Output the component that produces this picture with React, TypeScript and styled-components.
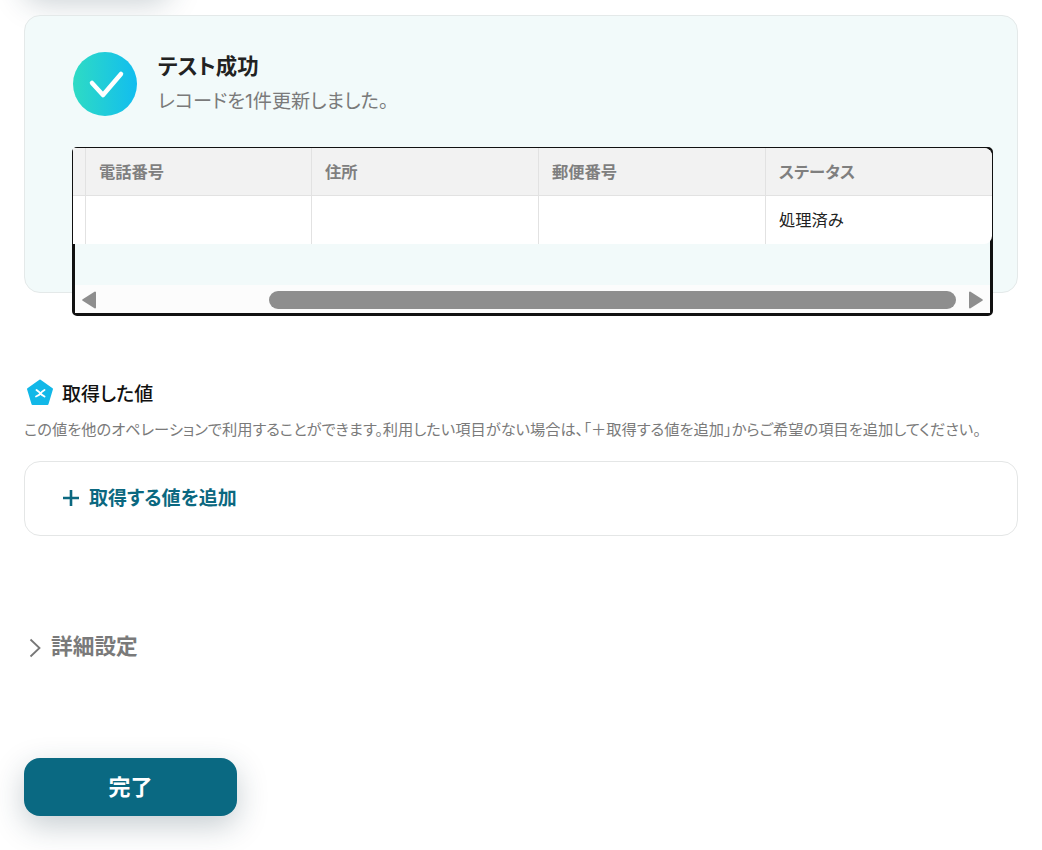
import React from "react";
import styled, { createGlobalStyle } from "styled-components";

const Global = createGlobalStyle`
  html, body { margin: 0; padding: 0; background: #fff; }
  body { font-family: Inter, "Noto Sans CJK JP", sans-serif; color: #222; font-feature-settings: "palt"; }
`;

const Page = styled.div`
  height: 850px;
  overflow: hidden;
  padding: 0 24px;
  box-sizing: border-box;
`;

const HiddenAction = styled.div`
  width: 146px;
  height: 58px;
  margin-top: -66px;
  margin-bottom: 23px;
  border-radius: 16px;
  background: #fff;
  box-shadow: 0 10px 30px rgba(30, 60, 75, 0.25);
`;

const ResultCard = styled.section`
  box-sizing: border-box;
  height: 278px;
  border: 1px solid #e4e9e9;
  border-radius: 16px;
  background: #f2fafa;
  padding: 36px 24px 0 48px;
`;

const ResultHead = styled.div`
  display: flex;
  align-items: center;
  gap: 21px;
`;

const CheckBadge = styled.div`
  width: 64px;
  height: 64px;
  border-radius: 50%;
  background: linear-gradient(90deg, #2edbc4 0%, #12bdef 100%);
  flex: none;
`;

const ResultTexts = styled.div`
  display: flex;
  flex-direction: column;
  gap: 8px;
  margin-top: -4px;
`;

const ResultTitle = styled.div`
  font-size: 21.4px;
  line-height: 30px;
  font-weight: 700;
  color: #222;
`;

const ResultSub = styled.div`
  font-size: 19.2px;
  line-height: 24px;
  color: #7a7a7a;
`;

const TableFrame = styled.div`
  box-sizing: border-box;
  width: 921px;
  height: 169px;
  margin: 31px 0 0 -1px;
  border: 3px solid #111;
  border-radius: 5px;
  display: flex;
  flex-direction: column;
`;

const Table = styled.div`
  height: 96px;
  margin: -2px -2px 0;
  background: #fff;
  border-radius: 0 8px 8px 0;
  overflow: hidden;
  display: grid;
  grid-template-columns: 13px 226px 227px 227px 1fr;
  grid-template-rows: 48px 48px;
`;

const HeadCell = styled.div`
  box-sizing: border-box;
  min-width: 0;
  background: #f2f2f2;
  border-bottom: 1px solid #e2e2e2;
  border-right: 1px solid #e2e2e2;
  padding: 0 0 1px 13px;
  display: flex;
  align-items: center;
  font-size: 16.3px;
  font-weight: 700;
  color: #7f7f7f;
  &:first-child { padding-left: 0; }
  &:nth-child(5) { border-right: none; }
`;

const BodyCell = styled.div`
  box-sizing: border-box;
  min-width: 0;
  border-right: 1px solid #e2e2e2;
  padding: 0 0 2px 13px;
  display: flex;
  align-items: center;
  font-size: 16.3px;
  color: #222;
  &:nth-child(6) { padding-left: 0; }
  &:last-child { border-right: none; }
`;

const Gap = styled.div`
  flex: 1;
`;

const ScrollBar = styled.div`
  box-sizing: border-box;
  height: 28px;
  background: #fcfcfc;
  display: flex;
  align-items: center;
  padding: 2px 7px 0;
`;

const Arrow = styled.svg`
  width: 14px;
  height: 18px;
  flex: none;
`;

const Track = styled.div`
  flex: 1;
  height: 18px;
  padding: 0 13px 0 173px;
  box-sizing: border-box;
`;

const Thumb = styled.div`
  height: 18px;
  border-radius: 9px;
  background: #8e8e8e;
`;

const SectionHead = styled.div`
  display: flex;
  align-items: center;
  gap: 8px;
  margin: 86px 0 0 2px;
  height: 28px;
`;

const SectionTitle = styled.h3`
  margin: 0;
  padding-top: 4px;
  font-size: 19px;
  font-weight: 500;
  color: #111;
  line-height: 28px;
`;

const SectionNote = styled.p`
  margin: 13px 0 0;
  font-size: 15.25px;
  line-height: 20px;
  color: #7a7a7a;
  white-space: nowrap;
`;

const AddCard = styled.div`
  box-sizing: border-box;
  height: 75px;
  margin-top: 21px;
  border: 1px solid #e4e6e6;
  border-radius: 16px;
  padding-left: 36px;
  display: flex;
  align-items: center;
  gap: 8px;
  font-size: 19px;
  font-weight: 700;
  color: #0b6880;
`;

const PlusIcon = styled.svg`
  width: 20px;
  height: 20px;
  margin-bottom: 2px;
`;

const AddLabel = styled.span`
  padding-bottom: 4px;
`;

const Details = styled.div`
  display: flex;
  align-items: center;
  gap: 6px;
  margin: 94px 0 0 1px;
  height: 34px;
  font-size: 21.7px;
  font-weight: 700;
  color: #7a7a7a;
`;

const DetailsLabel = styled.span`
  padding-bottom: 6px;
`;

const Chevron = styled.svg`
  width: 20px;
  height: 20px;
  margin-top: 2px;
`;

const DoneButton = styled.button`
  display: block;
  width: 213px;
  height: 58px;
  margin-top: 94px;
  padding: 0 0 4px;
  border: none;
  border-radius: 16px;
  background: #0a6982;
  color: #fff;
  font: 700 22px Inter, "Noto Sans CJK JP", sans-serif;
  box-shadow: 0 10px 30px rgba(30, 60, 75, 0.25);
`;

const heads = ["", "電話番号", "住所", "郵便番号", "ステータス"];
const cells = ["", "", "", "", "処理済み"];

export default function App() {
  return (
    <Page>
      <Global />
      <HiddenAction />
      <ResultCard>
        <ResultHead>
          <CheckBadge>
            <svg width="64" height="64" viewBox="0 0 64 64" fill="none">
              <path d="M19 31 L30 43 L48 22" stroke="#fff" strokeWidth="4.5" strokeLinecap="round" strokeLinejoin="round" />
            </svg>
          </CheckBadge>
          <ResultTexts>
            <ResultTitle>テスト成功</ResultTitle>
            <ResultSub>レコードを1件更新しました。</ResultSub>
          </ResultTexts>
        </ResultHead>
        <TableFrame>
          <Table>
            {heads.map((h, i) => <HeadCell key={i}>{h}</HeadCell>)}
            {cells.map((c, i) => <BodyCell key={i}>{c}</BodyCell>)}
          </Table>
          <Gap />
          <ScrollBar>
            <Arrow viewBox="0 0 14 18">
              <path d="M1.2 9 L13 1.5 V16.5 Z" fill="#8e8e8e" stroke="#8e8e8e" strokeWidth="2" strokeLinejoin="round" />
            </Arrow>
            <Track><Thumb /></Track>
            <Arrow viewBox="0 0 14 18">
              <path d="M12.8 9 L1 1.5 V16.5 Z" fill="#8e8e8e" stroke="#8e8e8e" strokeWidth="2" strokeLinejoin="round" />
            </Arrow>
          </ScrollBar>
        </TableFrame>
      </ResultCard>
      <SectionHead>
        <svg width="28" height="28" viewBox="0 0 28 28">
          <path d="M14 1.5 L26 10 L21.5 25 H6.5 L2 10 Z" fill="#12b8e8" stroke="#12b8e8" strokeWidth="2" strokeLinejoin="round" />
          <path d="M10.5 11 Q14 13.5 14.5 14.5 Q15 15.5 18.5 17.5 M18.5 11 Q15 13 14.5 14.5 Q13.5 16 10 17.5" stroke="#fff" strokeWidth="1.9" fill="none" strokeLinecap="round" />
        </svg>
        <SectionTitle>取得した値</SectionTitle>
      </SectionHead>
      <SectionNote>この値を他のオペレーションで利用することができます。利用したい項目がない場合は、「＋取得する値を追加」からご希望の項目を追加してください。</SectionNote>
      <AddCard>
        <PlusIcon viewBox="0 0 20 20">
          <path d="M10 2 V18 M2 10 H18" stroke="#0b6880" strokeWidth="2.6" />
        </PlusIcon>
        <AddLabel>取得する値を追加</AddLabel>
      </AddCard>
      <Details>
        <Chevron viewBox="0 0 20 20" fill="none">
          <path d="M5.5 1.5 L14.5 10 L5.5 18.5" stroke="#777" strokeWidth="1.8" />
        </Chevron>
        <DetailsLabel>詳細設定</DetailsLabel>
      </Details>
      <DoneButton>完了</DoneButton>
    </Page>
  );
}
